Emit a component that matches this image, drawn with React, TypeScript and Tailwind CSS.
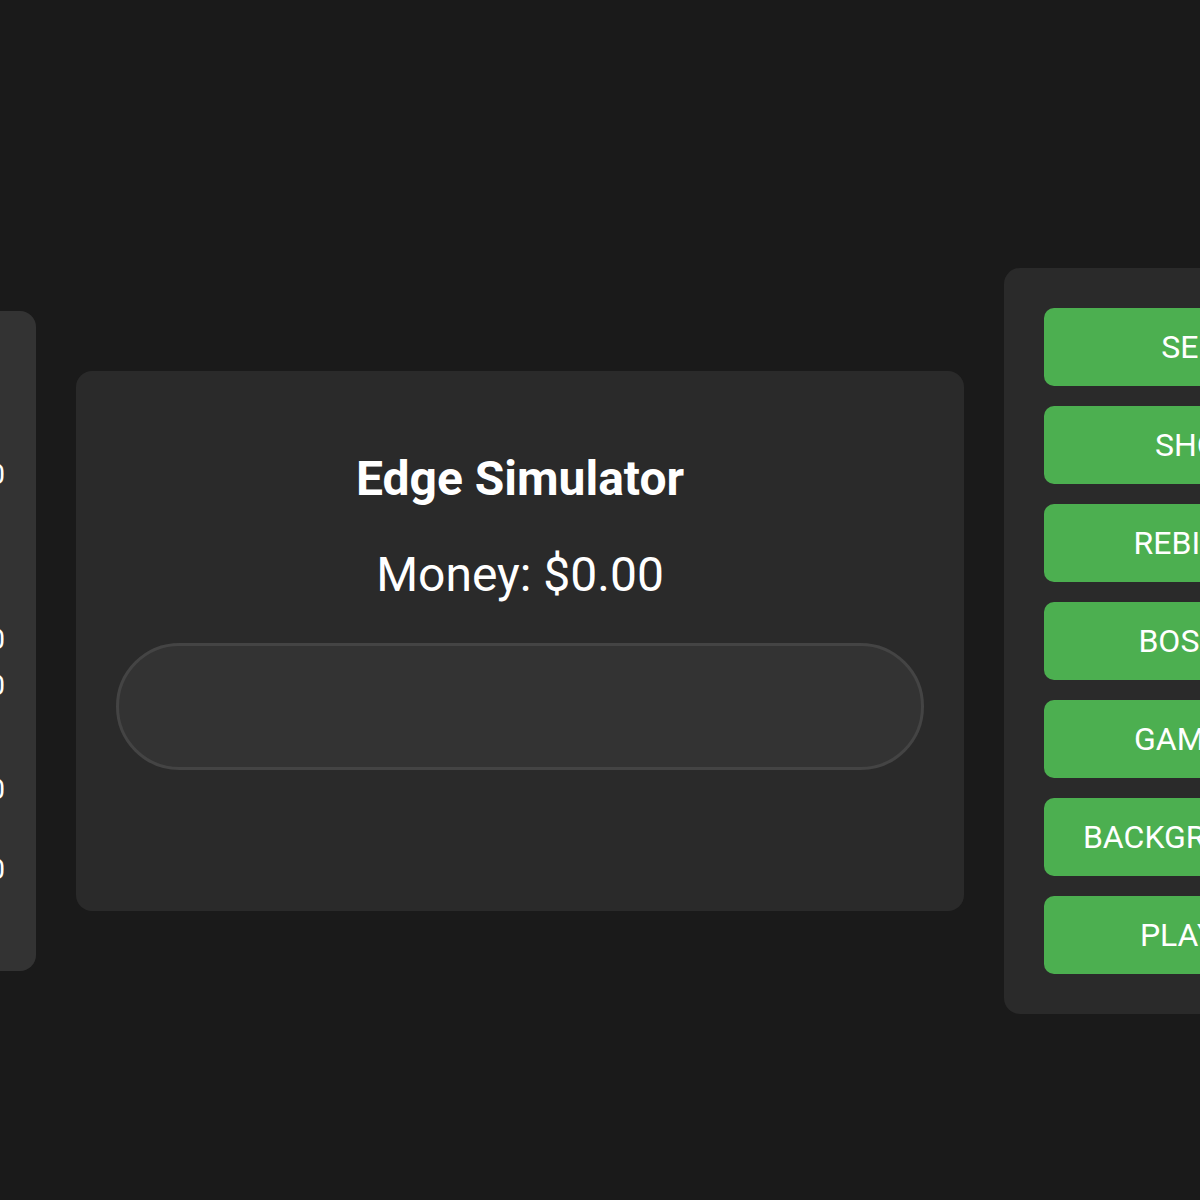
import React from "react";

const buttons = ["SELL", "SHOP", "REBIRTH", "BOSSES", "GAMBLE", "BACKGROUNDS", "PLAYER"];

export default function App() {
  return (
    <div
      className="w-full min-h-screen overflow-hidden bg-[#1a1a1a] text-white pt-[81px] flex items-center justify-center gap-10"
      style={{ fontFamily: "Roboto, 'Noto Sans', sans-serif" }}
    >
      {/* Left stats panel */}
      <div className="shrink-0 w-[226px] h-[660px] bg-[#333333] rounded-[16px] pl-10 pr-[31px] pt-10 flex flex-col text-[28px] leading-[34px]">
        <div className="text-center font-bold">Stats</div>
        <div className="flex justify-between mt-[73px]"><span>Clicks</span><span>0</span></div>
        <div className="flex justify-between mt-[131px]"><span>Rebirths</span><span>0</span></div>
        <div className="flex justify-between mt-[12px]"><span>Bosses</span><span>0</span></div>
        <div className="flex justify-between mt-[70px]"><span>Level</span><span>0</span></div>
        <div className="flex justify-between mt-[46px]"><span>XP</span><span>0</span></div>
      </div>

      {/* Center card */}
      <div className="shrink-0 w-[888px] h-[540px] bg-[#2a2a2a] rounded-[16px] p-10 flex flex-col items-center">
        <h1 className="mt-[40px] text-[48px] leading-[56px] font-bold">Edge Simulator</h1>
        <div className="mt-[40px] text-[48px] leading-[56px]">Money: $0.00</div>
        <div className="mt-[40px] w-full h-[127px] rounded-full bg-[#333333] border-[3px] border-[#444444]"></div>
      </div>

      {/* Right menu panel */}
      <div className="shrink-0 w-[386px] bg-[#2a2a2a] rounded-[16px] p-10 flex flex-col gap-5">
        {buttons.map((b) => (
          <button
            key={b}
            className="w-[306px] h-[78px] rounded-[10px] bg-[#4caf50] text-white text-[32px] leading-none"
          >
            {b}
          </button>
        ))}
      </div>
    </div>
  );
}
